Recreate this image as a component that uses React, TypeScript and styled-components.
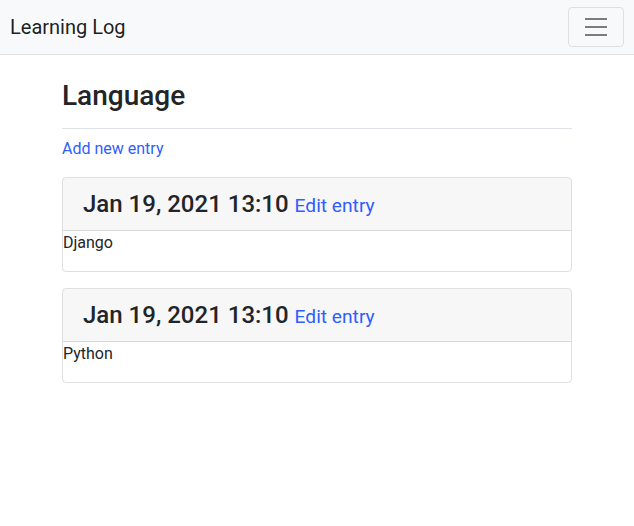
import React from "react";
import styled, { createGlobalStyle } from "styled-components";

const Global = createGlobalStyle`
  * { box-sizing: border-box; }
  body {
    margin: 0;
    font-family: Roboto, "Helvetica Neue", Arial, "Noto Sans", sans-serif;
    font-size: 16px;
    line-height: 1.5;
    color: #212529;
    background: #fff;
  }
`;

const Navbar = styled.nav`
  display: flex;
  align-items: center;
  justify-content: space-between;
  height: 55px;
  padding: 0 10px 1px 10px;
  background: #f8f9fa;
  border-bottom: 1px solid #dee2e6;
`;

const Brand = styled.a`
  font-size: 20px;
  line-height: 30px;
  color: rgba(0, 0, 0, 0.9);
  text-decoration: none;
`;

const Toggler = styled.button`
  width: 56px;
  height: 40px;
  padding: 0;
  display: flex;
  align-items: center;
  justify-content: center;
  background: transparent;
  border: 1px solid rgba(0, 0, 0, 0.1);
  border-radius: 4px;
`;

const Main = styled.main`
  width: 510px;
  margin: 0 auto;
  padding-top: 25px;
`;

const PageHeader = styled.div`
  padding-bottom: 8px;
  margin-bottom: 8px;
  border-bottom: 1px solid #dee2e6;
`;

const H2 = styled.h2`
  margin: 0 0 8px;
  font-size: 28px;
  font-weight: 500;
  line-height: 32px;
`;

const Link = styled.a`
  color: #2f5dff;
  text-decoration: none;
`;

const Para = styled.p`
  margin: 0 0 16px;
`;

const Card = styled.div`
  border: 1px solid rgba(0, 0, 0, 0.125);
  border-radius: 4px;
  margin-bottom: 16px;
  overflow: hidden;
`;

const CardHeader = styled.div`
  padding: 12px 20px;
  background: rgba(0, 0, 0, 0.03);
  border-bottom: 1px solid rgba(0, 0, 0, 0.125);
`;

const H3 = styled.h3`
  margin: 0;
  font-size: 24px;
  font-weight: 500;
  line-height: 28px;
`;

const Small = styled.small`
  font-size: 80%;
  font-weight: 400;
  line-height: 1;
`;

const CardBody = styled.div``;

const entries = ["Django", "Python"];

function HamburgerIcon() {
  return (
    <svg width="30" height="30" viewBox="0 0 30 30" aria-hidden="true">
      <path
        stroke="rgba(0,0,0,0.5)"
        strokeLinecap="butt"
        strokeMiterlimit={10}
        strokeWidth={2}
        d="M4 7h22M4 15h22M4 23h22"
      />
    </svg>
  );
}

export default function App() {
  return (
    <>
      <Global />
      <Navbar>
        <Brand href="#">Learning Log</Brand>
        <Toggler aria-label="Toggle navigation">
          <HamburgerIcon />
        </Toggler>
      </Navbar>
      <Main>
        <PageHeader>
          <H2>Language</H2>
        </PageHeader>
        <Para>
          <Link href="#">Add new entry</Link>
        </Para>
        {entries.map((text, i) => (
          <Card key={i}>
            <CardHeader>
              <H3>
                Jan 19, 2021 13:10 <Small><Link href="#">Edit entry</Link></Small>
              </H3>
            </CardHeader>
            <CardBody>
              <Para>{text}</Para>
            </CardBody>
          </Card>
        ))}
      </Main>
    </>
  );
}
